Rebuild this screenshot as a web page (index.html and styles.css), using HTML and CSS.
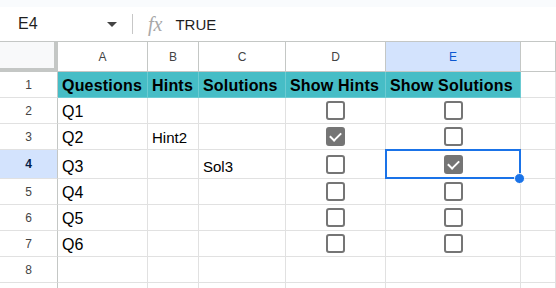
FILE: index.html
```html
<!DOCTYPE html>
<html lang="en">
<head>
  <meta charset="UTF-8">
  <title>Sheet</title>
  <link rel="stylesheet" href="styles.css">
</head>
<body>

<div class="top-strip"></div>

<div class="formula-bar">
  <div class="name-box">
    <span class="cell-ref">E4</span>
    <span class="caret"></span>
  </div>
  <div class="divider"></div>
  <span class="fx">fx</span>
  <span class="formula">TRUE</span>
</div>

<div class="grid">
  <div class="corner"></div>
  <div class="col-head">A</div>
  <div class="col-head">B</div>
  <div class="col-head">C</div>
  <div class="col-head">D</div>
  <div class="col-head selected">E</div>
  <div class="col-head"></div>

  <div class="row-head">1</div>
  <div class="cell title">Questions</div>
  <div class="cell title">Hints</div>
  <div class="cell title">Solutions</div>
  <div class="cell title">Show Hints</div>
  <div class="cell title">Show Solutions</div>
  <div class="cell"></div>

  <div class="row-head">2</div>
  <div class="cell">Q1</div>
  <div class="cell"></div>
  <div class="cell"></div>
  <div class="cell box"><span class="check"></span></div>
  <div class="cell box"><span class="check"></span></div>
  <div class="cell"></div>

  <div class="row-head">3</div>
  <div class="cell">Q2</div>
  <div class="cell small">Hint2</div>
  <div class="cell"></div>
  <div class="cell box"><span class="check on"></span></div>
  <div class="cell box"><span class="check"></span></div>
  <div class="cell"></div>

  <div class="row-head selected">4</div>
  <div class="cell">Q3</div>
  <div class="cell"></div>
  <div class="cell small">Sol3</div>
  <div class="cell box"><span class="check"></span></div>
  <div class="cell box active"><span class="check on"></span></div>
  <div class="cell"></div>

  <div class="row-head">5</div>
  <div class="cell">Q4</div>
  <div class="cell"></div>
  <div class="cell"></div>
  <div class="cell box"><span class="check"></span></div>
  <div class="cell box"><span class="check"></span></div>
  <div class="cell"></div>

  <div class="row-head">6</div>
  <div class="cell">Q5</div>
  <div class="cell"></div>
  <div class="cell"></div>
  <div class="cell box"><span class="check"></span></div>
  <div class="cell box"><span class="check"></span></div>
  <div class="cell"></div>

  <div class="row-head">7</div>
  <div class="cell">Q6</div>
  <div class="cell"></div>
  <div class="cell"></div>
  <div class="cell box"><span class="check"></span></div>
  <div class="cell box"><span class="check"></span></div>
  <div class="cell"></div>

  <div class="row-head">8</div>
  <div class="cell"></div>
  <div class="cell"></div>
  <div class="cell"></div>
  <div class="cell"></div>
  <div class="cell"></div>
  <div class="cell"></div>

  <div class="row-head"></div>
  <div class="cell"></div>
  <div class="cell"></div>
  <div class="cell"></div>
  <div class="cell"></div>
  <div class="cell"></div>
  <div class="cell"></div>
</div>

</body>
</html>
```

FILE: styles.css
```css
:root {
  --grid-line: #e1e1e1;
  --head-line: #c4c7c5;
  --teal: #46bdc6;
  --pick: #d3e3fd;
  --blue: #1a73e8;
  --box: #757575;
}

html, body {
  margin: 0;
  background: #fff;
  font-family: 'Liberation Sans', Arial, sans-serif;
  color: #000;
  overflow: hidden;
  height: 288px;
}

.top-strip {
  height: 7px;
  background: #f9fbfd;
}

.formula-bar {
  height: 35px;
  display: flex;
  align-items: center;
  box-sizing: border-box;
  border-bottom: 1px solid var(--head-line);
}

.name-box {
  width: 132px;
  display: flex;
  align-items: center;
  justify-content: space-between;
  padding: 0 15px 0 18px;
  box-sizing: border-box;
}

.cell-ref {
  font-size: 16px;
  color: #1f1f1f;
}

.caret {
  width: 0;
  height: 0;
  border-left: 5px solid transparent;
  border-right: 5px solid transparent;
  border-top: 5px solid #444;
}

.divider {
  width: 1px;
  height: 20px;
  background: #c7c7c7;
}

.fx {
  font-family: 'Liberation Serif', serif;
  font-style: italic;
  font-size: 20px;
  color: #a8a8a8;
  margin: 0 13px 0 15px;
}

.formula {
  font-size: 15px;
  color: #1f1f1f;
}

.grid {
  display: grid;
  grid-template-columns: 58px 90px 51px 87px 100px 135px 1fr;
  grid-template-rows: 30px 26px 26px 26px 29px 26px 26px 26px 26px 26px;
}

.grid > div {
  box-sizing: border-box;
  border-right: 1px solid var(--grid-line);
  border-bottom: 1px solid var(--grid-line);
}

.corner {
  background: #f8f9fa;
  border-right: 4px solid var(--head-line) !important;
  border-bottom: 4px solid var(--head-line) !important;
}

.col-head,
.row-head {
  display: flex;
  align-items: center;
  justify-content: center;
  font-size: 12px;
  color: #444;
}

.col-head {
  border-right-color: var(--head-line) !important;
  border-bottom-color: var(--head-line) !important;
}

.row-head {
  border-right-color: var(--head-line) !important;
}

.col-head.selected,
.row-head.selected {
  background: var(--pick);
  color: #0b57d0;
}

.row-head.selected {
  font-weight: bold;
  color: #041e49;
}

.cell {
  display: flex;
  align-items: flex-end;
  padding: 0 4px 2px;
  font-size: 16px;
  line-height: 18px;
  white-space: nowrap;
}

.cell.small {
  font-size: 15px;
}

.cell.title {
  background: var(--teal);
  font-weight: bold;
  letter-spacing: 0.2px;
  border-right-color: #6ccbd2 !important;
  border-bottom-color: #6ccbd2 !important;
}

.cell.box {
  align-items: center;
  justify-content: center;
  padding: 0;
}

.check {
  width: 19px;
  height: 19px;
  box-sizing: border-box;
  border: 2px solid var(--box);
  border-radius: 3px;
  position: relative;
}

.check.on {
  background: var(--box);
}

.check.on::after {
  content: "";
  position: absolute;
  left: 4px;
  top: 1px;
  width: 5px;
  height: 9px;
  border-right: 2px solid #fff;
  border-bottom: 2px solid #fff;
  transform: rotate(45deg);
}

.cell.active {
  position: relative;
}

.cell.active::before {
  content: "";
  position: absolute;
  left: -1px;
  top: -1px;
  right: -1px;
  bottom: -1px;
  border: 2px solid var(--blue);
}

.cell.active::after {
  content: "";
  position: absolute;
  right: -5px;
  bottom: -6px;
  width: 9px;
  height: 9px;
  border-radius: 50%;
  background: var(--blue);
  border: 1px solid #fff;
  z-index: 2;
}
```
